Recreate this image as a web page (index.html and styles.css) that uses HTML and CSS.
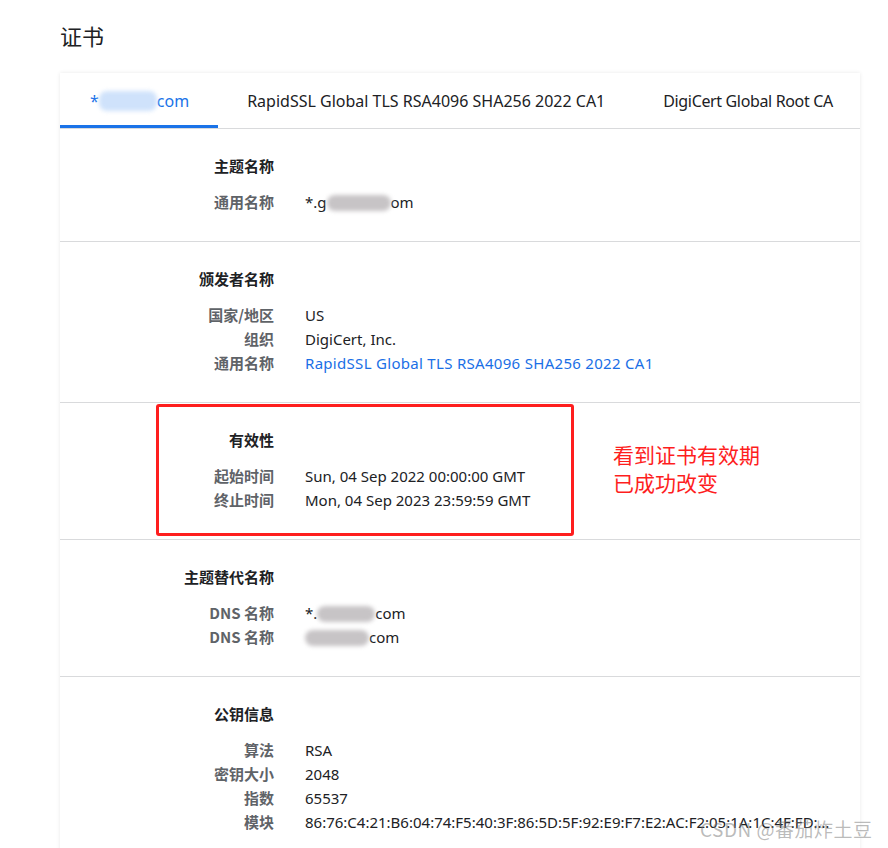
FILE: index.html
```html
<!DOCTYPE html>
<html lang="zh-CN">
<head>
<meta charset="utf-8">
<title>证书</title>
<link rel="stylesheet" href="styles.css">
</head>
<body>
<div class="page">
  <h1 class="title">证书</h1>
  <div class="card">
    <div class="tabs">
      <div class="tab active">*<span class="blur blur-blue"></span>com</div>
      <div class="tab">RapidSSL Global TLS RSA4096 SHA256 2022 CA1</div>
      <div class="tab narrow">DigiCert Global Root CA</div>
    </div>

    <section class="sec">
      <div class="head">主题名称</div>
      <div class="rows">
        <div class="lbl">通用名称</div><div class="val">*.g<span class="blur blur-gray w70"></span>om</div>
      </div>
    </section>

    <section class="sec">
      <div class="head">颁发者名称</div>
      <div class="rows">
        <div class="lbl">国家/地区</div><div class="val">US</div>
        <div class="lbl">组织</div><div class="val">DigiCert, Inc.</div>
        <div class="lbl">通用名称</div><div class="val link">RapidSSL Global TLS RSA4096 SHA256 2022 CA1</div>
      </div>
    </section>

    <section class="sec">
      <div class="head">有效性</div>
      <div class="rows">
        <div class="lbl">起始时间</div><div class="val">Sun, 04 Sep 2022 00:00:00 GMT</div>
        <div class="lbl">终止时间</div><div class="val">Mon, 04 Sep 2023 23:59:59 GMT</div>
      </div>
    </section>

    <section class="sec">
      <div class="head">主题替代名称</div>
      <div class="rows">
        <div class="lbl">DNS 名称</div><div class="val">*.<span class="blur blur-gray w60"></span>com</div>
        <div class="lbl">DNS 名称</div><div class="val"><span class="blur blur-gray w66"></span>com</div>
      </div>
    </section>

    <section class="sec last">
      <div class="head">公钥信息</div>
      <div class="rows">
        <div class="lbl">算法</div><div class="val">RSA</div>
        <div class="lbl">密钥大小</div><div class="val">2048</div>
        <div class="lbl">指数</div><div class="val">65537</div>
        <div class="lbl">模块</div><div class="val">86:76:C4:21:B6:04:74:F5:40:3F:86:5D:5F:92:E9:F7:E2:AC:F2:05:1A:1C:4F:FD:…</div>
      </div>
    </section>

    <div class="highlight"></div>
    <div class="note">看到证书有效期<br>已成功改变</div>
  </div>
  <div class="watermark">CSDN @番茄炸土豆</div>
</div>
</body>
</html>
```
FILE: styles.css
```css
* { box-sizing: border-box; }
html, body { margin: 0; padding: 0; background: #fff; }
body {
  font-family: "Noto Sans", "Noto Sans CJK SC", sans-serif;
  color: #202124;
  width: 888px;
  height: 848px;
  overflow: hidden;
}
.page {
  position: relative;
  padding: 19px 28px 0 60px;
}
.title {
  margin: 0;
  font-family: "Noto Sans CJK SC", sans-serif;
  font-weight: 400;
  font-size: 22px;
  line-height: 32px;
  color: #202124;
}
.card {
  position: relative;
  margin-top: 22px;
  width: 800px;
  background: #fff;
  box-shadow: 0 0 4px rgba(0, 0, 0, 0.09);
}
.tabs {
  display: flex;
  height: 56px;
  border-bottom: 1px solid #d9dadc;
}
.tab {
  display: flex;
  align-items: center;
  padding: 3px 29px 0 29px;
  font-size: 16px;
  color: #202124;
  white-space: nowrap;
  border-bottom: 3px solid transparent;
}
.tab.narrow { letter-spacing: -0.35px; }
.tab.active {
  color: #1a73e8;
  border-bottom-color: #1a73e8;
  padding-left: 30px;
}
.blur {
  display: inline-block;
  height: 16px;
  vertical-align: -3px;
  border-radius: 8px;
  filter: blur(2px);
}
.blur-blue { width: 58px; height: 20px; background: #cfe2fb; vertical-align: -8px; }
.blur-gray { background: #c7c4c6; }
.w70 { width: 64px; }
.w60 { width: 58px; }
.w66 { width: 64px; }
.sec {
  padding: 25px 0 27px;
  border-bottom: 1px solid #d9dadc;
}
.sec.last { border-bottom: none; }
.head, .lbl {
  width: 214px;
  text-align: right;
  font-family: "Noto Sans CJK SC", sans-serif;
  font-size: 15px;
  line-height: 24px;
}
.head {
  font-weight: 700;
  color: #202124;
  margin-bottom: 12px;
}
.rows {
  display: grid;
  grid-template-columns: 214px 1fr;
  column-gap: 31px;
}
.lbl {
  font-weight: 600;
  color: #5f6368;
  white-space: nowrap;
}
.val {
  font-size: 15px;
  line-height: 24px;
  color: #202124;
  white-space: nowrap;
}
.val.link { color: #1a6fe6; letter-spacing: 0.3px; }
.highlight {
  position: absolute;
  left: 96px;
  top: 331px;
  width: 418px;
  height: 132px;
  border: 3px solid #fe1e1e;
  border-radius: 3px;
}
.note {
  position: absolute;
  left: 553px;
  top: 367px;
  font-family: "Noto Sans CJK SC", sans-serif;
  font-size: 21px;
  line-height: 28px;
  color: #fe1e1e;
}
.watermark {
  position: absolute;
  left: 700px;
  top: 816px;
  font-family: "Noto Sans CJK SC", sans-serif;
  font-size: 19px;
  line-height: 26px;
  letter-spacing: 0.5px;
  color: rgba(120, 120, 120, 0.5);
  white-space: nowrap;
}
```
